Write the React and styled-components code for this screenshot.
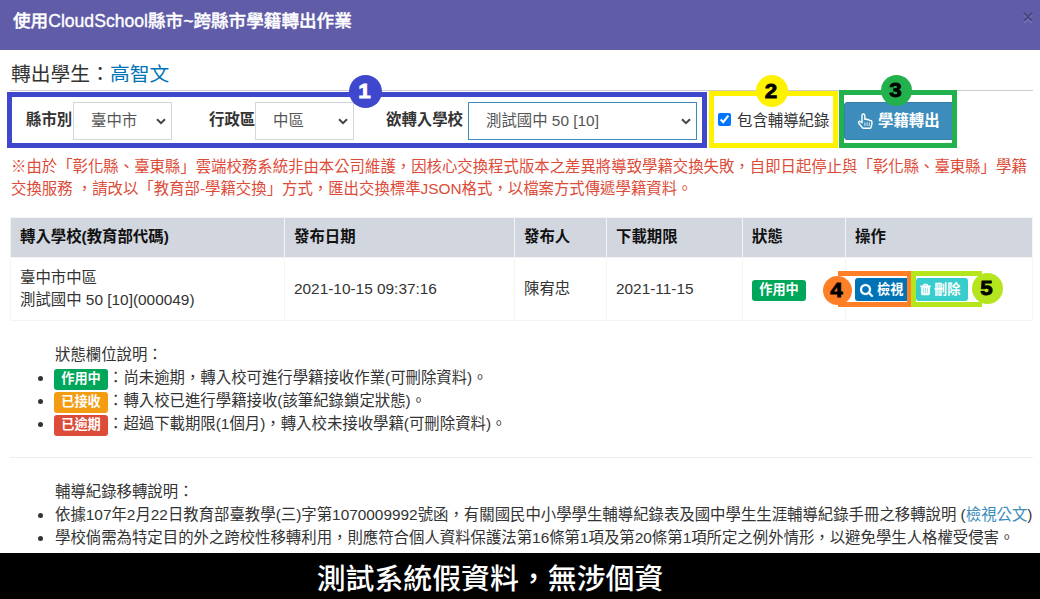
import React from 'react';
import styled, { createGlobalStyle } from 'styled-components';

const GlobalStyle = createGlobalStyle`
  * { box-sizing: border-box; }
  body {
    margin: 0;
    background: #fff;
    color: #333;
    font: 400 15.4px/22px "Liberation Sans", "Noto Sans CJK TC", sans-serif;
    overflow: hidden;
  }
`;

const Page = styled.div`
  position: relative;
  width: 1040px;
  height: 599px;
  display: flex;
  flex-direction: column;
  overflow: hidden;
`;

const Header = styled.header`
  flex: none;
  height: 50px;
  padding: 9px 6px 0 13px;
  display: flex;
  justify-content: space-between;
  align-items: flex-start;
  background: #605ca8;
  color: #fff;
`;

const Title = styled.h1`
  margin: 0;
  font-size: 17.6px;
  line-height: 25px;
  font-weight: 500;
  white-space: nowrap;
  -webkit-text-stroke: 0.35px currentColor;
`;

const CloseButton = styled.button`
  width: 12px;
  height: 12px;
  margin-top: 2px;
  padding: 0;
  border: 0;
  background: none;
  svg { display: block; }
`;

const Content = styled.main`
  flex: 1;
  padding: 0 7px 0 10px;
`;

const StudentHeading = styled.h2`
  height: 41px;
  margin: 0 0 11px;
  padding: 10px 0 0 1px;
  border-bottom: 1px solid #ccc;
  font-size: 19.8px;
  line-height: 28px;
  font-weight: 400;
  span { color: #0073b7; }
`;

const FormRow = styled.div`
  display: flex;
  height: 38px;
  align-items: center;
  padding-left: 16px;
`;

const Field = styled.label`
  display: flex;
  align-items: center;
  gap: ${p => p.$gap || 0}px;
  margin-right: ${p => p.$after}px;
  color: #333;
  white-space: nowrap;
  b { font-weight: 700; padding-bottom: 2px; width: ${p => p.$label}px; }
`;

const SelectBox = styled.span`
  display: grid;
  width: ${p => p.$width}px;
  height: 38px;
  align-items: center;
  select, svg { grid-area: 1 / 1; }
  svg { justify-self: end; margin-right: 6px; pointer-events: none; }
`;

const Select = styled.select`
  appearance: none;
  width: 100%;
  height: 38px;
  padding: 6px 20px 6px 17px;
  border: 1px solid ${p => (p.$focused ? '#3c8dbc' : '#d2d6de')};
  border-radius: 0;
  outline: 0;
  background-color: #fff;
  color: #555;
  font: inherit;
`;

const CheckField = styled.label`
  display: flex;
  align-items: center;
  gap: 6px;
  width: 126px;
  white-space: nowrap;
  input { width: 13px; height: 13px; margin: 0 0 3px; }
`;

const TransferButton = styled.button`
  display: flex;
  align-items: center;
  gap: 4px;
  width: 111px;
  height: 38px;
  padding: 0 0 0 12px;
  border: 1px solid #367fa9;
  border-radius: 3px;
  background: #3c8dbc;
  color: #fff;
  font: inherit;
  font-weight: 700;
  white-space: nowrap;
`;

const Warning = styled.p`
  margin: 16px 0 17px;
  padding-left: 1px;
  color: #dd4b39;
  white-space: nowrap;
`;

const Table = styled.table`
  width: 1022px;
  border-collapse: collapse;
  table-layout: fixed;
  th, td { border: 1px solid #f4f4f4; text-align: left; padding: 0 9px; }
  th { height: 40px; padding-bottom: 2px; background: #d2d6de; color: #111; font-weight: 700; }
  td { height: 63px; }
`;

const Badge = styled.span`
  display: inline-block;
  width: 54px;
  height: 21px;
  border-radius: 3px;
  background: ${p => p.$color};
  color: #fff;
  font-size: 13.2px;
  line-height: 20px;
  font-weight: 700;
  text-align: center;
`;

const Actions = styled.div`
  display: flex;
  gap: 6px;
`;

const SmallButton = styled.button`
  display: flex;
  align-items: center;
  gap: ${p => p.$gap}px;
  width: ${p => p.$width}px;
  height: 23px;
  padding: 1px 0 0 ${p => p.$inset}px;
  border: 0;
  border-radius: 3px;
  background: ${p => p.$color};
  color: #fff;
  font: inherit;
  font-size: 13.2px;
  line-height: 22px;
  font-weight: 700;
  white-space: nowrap;
`;

const Notes = styled.section`
  margin-top: 22px;
  padding-left: 44px;
  p { margin: 0; padding-left: 1px; height: 23px; line-height: 23px; }
`;

const NoteList = styled.ul`
  margin: 0;
  padding: 0;
  li { height: 23px; line-height: 23px; white-space: nowrap; padding-left: ${p => p.$inset || 0}px; }
  a { color: #3c8dbc; text-decoration: none; }
`;

const LegendItem = styled.li`
  ${Badge} { vertical-align: top; margin-top: 3px; }
`;

const Divider = styled.hr`
  margin: 22px 0 0;
  border: 0;
  border-top: 1px solid #eee;
`;

const Caption = styled.footer`
  flex: none;
  height: 46px;
  padding-right: 60px;
  background: #000;
  color: #fff;
  text-align: center;
  font: 500 28.9px/46px "Noto Sans CJK TC", sans-serif;
`;

const Frame = styled.div`
  position: absolute;
  left: ${p => p.$x}px;
  top: ${p => p.$y}px;
  width: ${p => p.$w}px;
  height: ${p => p.$h}px;
  border: 5px solid ${p => p.$color};
  ${p => p.$open === 'left' && 'border-left: 0; border-right-width: 4px;'}
  ${p => p.$open === 'right' && 'border-right: 0;'}
  pointer-events: none;
`;

const Marker = styled.div`
  position: absolute;
  left: ${p => p.$x}px;
  top: ${p => p.$y}px;
  width: ${p => p.$size}px;
  height: ${p => p.$size}px;
  padding-right: 2px;
  border-radius: 50%;
  background: ${p => p.$color};
  color: ${p => p.$text || '#000'};
  font: 700 20px/${p => p.$size}px "Liberation Sans", sans-serif;
  -webkit-text-stroke: 0.8px currentColor;
  text-align: center;
  span { display: block; transform: scaleX(1.12); }
`;

const Icon = ({ size, children }) => (
  <svg width={size} height={size} viewBox="0 0 1792 1792" fill="currentColor">{children}</svg>
);

const SearchIcon = () => (
  <Icon size={14}>
    <path d="M1152 832q0-185-131.5-316.5t-316.5-131.5-316.5 131.5-131.5 316.5 131.5 316.5 316.5 131.5 316.5-131.5 131.5-316.5zm512 832q0 52-38 90t-90 38q-54 0-90-38l-343-342q-179 124-399 124-143 0-273.5-55.5t-225-150-150-225-55.5-273.5 55.5-273.5 150-225 225-150 273.5-55.5 273.5 55.5 225 150 150 225 55.5 273.5q0 220-124 399l343 343q37 37 37 90z" stroke="currentColor" strokeWidth="30" />
  </Icon>
);

const TrashIcon = () => (
  <Icon size={13}>
    <path d="M704 1376v-704q0-14-9-23t-23-9h-64q-14 0-23 9t-9 23v704q0 14 9 23t23 9h64q14 0 23-9t9-23zm256 0v-704q0-14-9-23t-23-9h-64q-14 0-23 9t-9 23v704q0 14 9 23t23 9h64q14 0 23-9t9-23zm256 0v-704q0-14-9-23t-23-9h-64q-14 0-23 9t-9 23v704q0 14 9 23t23 9h64q14 0 23-9t9-23zm-544-992h448l-48-117q-7-9-17-11h-317q-10 2-17 11zm928 32v64q0 14-9 23t-23 9h-96v948q0 83-47 143.5t-113 60.5h-832q-66 0-113-58.5t-47-141.5v-952h-96q-14 0-23-9t-9-23v-64q0-14 9-23t23-9h309l70-167q15-37 54-63t79-26h320q40 0 79 26t54 63l70 167h309q14 0 23 9t9 23z" stroke="currentColor" strokeWidth="70" />
  </Icon>
);

const HandIcon = () => (
  <svg width="17" height="17" viewBox="0 0 17 17" fill="none" stroke="currentColor" strokeWidth="1.4" strokeLinecap="round" strokeLinejoin="round">
    <path d="M5 9.800V2.400a1.400 1.400 0 0 1 2.800 0v3.900c1-.6 2-.3 2.400.5 1-.5 1.900-.1 2.200.7 1.400-.5 2.500.2 2.500 1.600v1.800c0 1.300-.8 2-.8 3.100 0 .8-.4 1.200-1.200 1.200H6.700c-.8 0-1.200-.3-1.600-.9L1.700 10.200c-.8-1.300.7-2.500 1.800-1.500z" />
    <path d="M7.900 9.800v2.800M10.100 9.800v2.800M12.300 9.800v2.800" strokeWidth="0.8" />
  </svg>
);

const Chevron = () => (
  <svg width="10" height="7" viewBox="0 0 10 7" fill="none" stroke="#444" strokeWidth="2">
    <path d="M1 1.200l4 4 4-4" />
  </svg>
);

const Dropdown = ({ width, focused, value }) => (
  <SelectBox $width={width}>
    <Select $focused={focused}><option>{value}</option></Select>
    <Chevron />
  </SelectBox>
);

const COLUMNS = [
  ['轉入學校(教育部代碼)', 274],
  ['發布日期', 230],
  ['發布人', 92],
  ['下載期限', 136],
  ['狀態', 103],
  ['操作', 187],
];

const LEGEND = [
  ['作用中', '#00a65a', '：尚未逾期，轉入校可進行學籍接收作業(可刪除資料)。'],
  ['已接收', '#f39c12', '：轉入校已進行學籍接收(該筆紀錄鎖定狀態)。'],
  ['已逾期', '#dd4b39', '：超過下載期限(1個月)，轉入校未接收學籍(可刪除資料)。'],
];

export default function App() {
  return (
    <Page>
      <GlobalStyle />
      <Header>
        <Title>使用CloudSchool縣市~跨縣市學籍轉出作業</Title>
        <CloseButton aria-label="關閉">
          <svg width="12" height="12" viewBox="0 0 12 12" fill="none" strokeWidth="2.4">
            <path d="M2 3.200l8 8M10 3.200l-8 8" stroke="#8481bd" />
            <path d="M2 2l8 8M10 2l-8 8" stroke="#4b4885" />
          </svg>
        </CloseButton>
      </Header>
      <Content>
        <StudentHeading>轉出學生：<span>高智文</span></StudentHeading>
        <FormRow>
          <Field $label={47} $after={37}><b>縣市別</b><Dropdown width={99} value="臺中市" /></Field>
          <Field $label={46} $after={32}><b>行政區</b><Dropdown width={99} value="中區" /></Field>
          <Field $label={78} $gap={4} $after={21}><b>欲轉入學校</b><Dropdown width={229} focused value="測試國中 50 [10]" /></Field>
          <CheckField><input type="checkbox" defaultChecked />包含輔導紀錄</CheckField>
          <TransferButton><HandIcon />學籍轉出</TransferButton>
        </FormRow>
        <Warning>
          ※由於「彰化縣、臺東縣」雲端校務系統非由本公司維護，因核心交換程式版本之差異將導致學籍交換失敗，自即日起停止與「彰化縣、臺東縣」學籍
          <br />
          交換服務 ，請改以「教育部-學籍交換」方式，匯出交換標準JSON格式，以檔案方式傳遞學籍資料。
        </Warning>
        <Table>
          <colgroup>{COLUMNS.map(([name, width]) => <col key={name} width={width} />)}</colgroup>
          <thead><tr>{COLUMNS.map(([name]) => <th key={name}>{name}</th>)}</tr></thead>
          <tbody>
            <tr>
              <td>臺中市中區<br />測試國中 50 [10](000049)</td>
              <td>2021-10-15 09:37:16</td>
              <td>陳宥忠</td>
              <td>2021-11-15</td>
              <td><Badge $color="#00a65a">作用中</Badge></td>
              <td>
                <Actions>
                  <SmallButton $color="#0073b7" $width={55} $inset={5} $gap={3}><SearchIcon />檢視</SmallButton>
                  <SmallButton $color="#39cccc" $width={52} $inset={3} $gap={2}><TrashIcon />刪除</SmallButton>
                </Actions>
              </td>
            </tr>
          </tbody>
        </Table>
        <Notes>
          <p>狀態欄位說明：</p>
          <NoteList>
            {LEGEND.map(([name, color, text]) => (
              <LegendItem key={name}><Badge $color={color}>{name}</Badge>{text}</LegendItem>
            ))}
          </NoteList>
        </Notes>
        <Divider />
        <Notes>
          <p>輔導紀錄移轉說明：</p>
          <NoteList $inset={1}>
            <li>依據107年2月22日教育部臺教學(三)字第1070009992號函，有關國民中小學學生輔導紀錄表及國中學生生涯輔導紀錄手冊之移轉說明 (<a>檢視公文</a>)</li>
            <li>學校倘需為特定目的外之跨校性移轉利用，則應符合個人資料保護法第16條第1項及第20條第1項所定之例外情形，以避免學生人格權受侵害。</li>
          </NoteList>
        </Notes>
      </Content>
      <Caption>測試系統假資料，無涉個資</Caption>

      <Frame $x={7} $y={92} $w={700} $h={56} $color="#3f48cc" />
      <Frame $x={709} $y={91} $w={129} $h={57} $color="#fff200" />
      <Frame $x={839} $y={90} $w={118} $h={58} $color="#22b14c" />
      <Frame $x={838} $y={271} $w={73} $h={36} $color="#ff7f27" $open="left" />
      <Frame $x={911} $y={271} $w={71} $h={36} $color="#b5e61d" $open="right" />
      <Marker $x={349} $y={75} $size={33} $color="#3f48cc" $text="#fff"><span>1</span></Marker>
      <Marker $x={756} $y={75} $size={32} $color="#fff200"><span>2</span></Marker>
      <Marker $x={881} $y={75} $size={31} $color="#22b14c"><span>3</span></Marker>
      <Marker $x={823} $y={276} $size={29} $color="#ff7f27"><span>4</span></Marker>
      <Marker $x={972} $y={273} $size={31} $color="#b5e61d"><span>5</span></Marker>
    </Page>
  );
}
